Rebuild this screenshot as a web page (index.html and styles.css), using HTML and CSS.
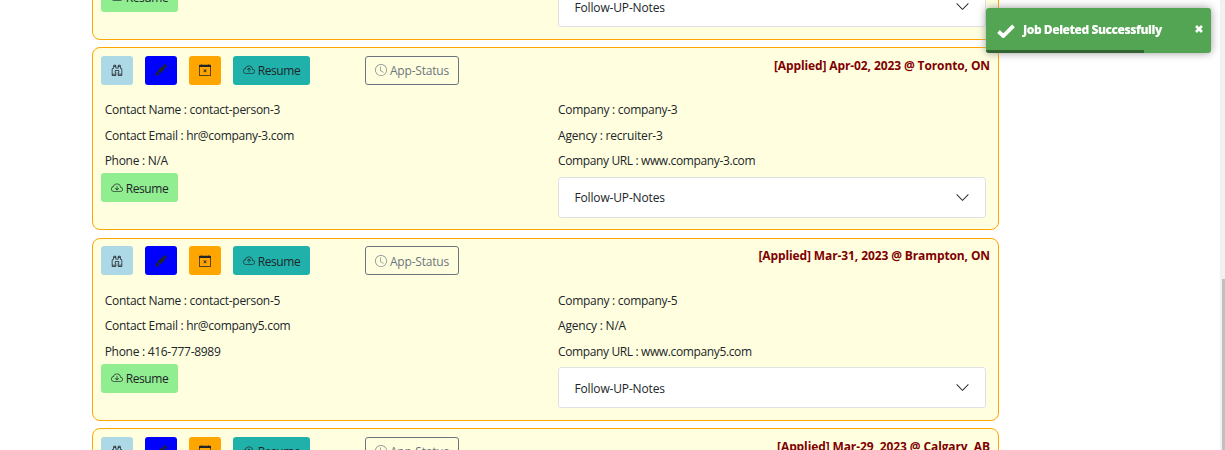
FILE: index.html
```
<!DOCTYPE html>
<html lang="en">
<head>
<meta charset="utf-8">
<title>Job Applications</title>
<link rel="stylesheet" href="styles.css">
</head>
<body>
<svg class="sprite" aria-hidden="true">
  <symbol id="binoculars" viewBox="0 0 16 16"><path d="M3 2.500A1.500 1.500 0 0 1 4.500 1h1A1.500 1.500 0 0 1 7 2.500V5h2V2.500A1.500 1.500 0 0 1 10.500 1h1A1.500 1.500 0 0 1 13 2.500v2.382a.5.5 0 0 0 .276.447l.895.447A1.500 1.500 0 0 1 15 7.118V14.500a1.500 1.500 0 0 1-1.500 1.500h-3A1.500 1.500 0 0 1 9 14.500v-3a.5.5 0 0 1 .146-.354l.854-.853V9.500a.5.5 0 0 0-.5-.5h-3a.5.5 0 0 0-.5.5v.793l.854.853A.5.5 0 0 1 7 11.500v3A1.500 1.500 0 0 1 5.500 16h-3A1.500 1.500 0 0 1 1 14.500V7.118a1.500 1.500 0 0 1 .83-1.342l.894-.447A.5.5 0 0 0 3 4.882V2.500zM4.500 2a.5.5 0 0 0-.5.5V3h2v-.5a.5.5 0 0 0-.5-.5h-1zM6 4H4v.882a1.500 1.500 0 0 1-.83 1.342l-.894.447A.5.5 0 0 0 2 7.118V13h4v-1.293l-.854-.853A.5.5 0 0 1 5 10.500v-1A1.500 1.500 0 0 1 6.500 8h3A1.500 1.500 0 0 1 11 9.500v1a.5.5 0 0 1-.146.354l-.854.853V13h4V7.118a.5.5 0 0 0-.276-.447l-.895-.447A1.500 1.500 0 0 1 12 4.882V4h-2v1.500a.5.5 0 0 1-.5.5h-3a.5.5 0 0 1-.5-.5V4zm4-1h2v-.5a.5.5 0 0 0-.5-.5h-1a.5.5 0 0 0-.5.5V3zm4 11h-4v.5a.5.5 0 0 0 .5.5h3a.5.5 0 0 0 .5-.5V14zm-8 0H2v.5a.5.5 0 0 0 .5.5h3a.5.5 0 0 0 .5-.5V14z"/></symbol>
  <symbol id="pencil" viewBox="0 0 16 16"><path d="M12.854.146a.5.5 0 0 0-.707 0L10.500 1.793 14.207 5.500l1.647-1.646a.5.5 0 0 0 0-.708l-3-3zM13.500 6.207 9.793 2.500 3.293 9H3.500a.5.5 0 0 1 .5.5v.5h.5a.5.5 0 0 1 .5.5v.5h.5a.5.5 0 0 1 .5.5v.5h.5a.5.5 0 0 1 .5.5v.207l6.500-6.500zM6.032 13.675A.5.5 0 0 1 6 13.500V13h-.5a.5.5 0 0 1-.5-.5V12h-.5a.5.5 0 0 1-.5-.5V11h-.5a.5.5 0 0 1-.5-.5V10h-.5a.5.5 0 0 1-.175-.032l-.179.178a.5.5 0 0 0-.11.168l-2 5a.5.5 0 0 0 .65.65l5-2a.5.5 0 0 0 .168-.11l.178-.179z"/></symbol>
  <symbol id="calendar" viewBox="0 0 16 16"><path d="M6.146 7.146a.5.5 0 0 1 .708 0L8 8.293l1.146-1.147a.5.5 0 1 1 .708.708L8.707 9l1.147 1.146a.5.5 0 0 1-.708.708L8 9.707l-1.146 1.147a.5.5 0 0 1-.708-.708L7.293 9 6.146 7.854a.5.5 0 0 1 0-.708z"/><path d="M3.500 0a.5.5 0 0 1 .5.5V1h8V.5a.5.5 0 0 1 1 0V1h2a1 1 0 0 1 1 1v13a1 1 0 0 1-1 1H1a1 1 0 0 1-1-1V2a1 1 0 0 1 1-1h2V.5a.5.5 0 0 1 .5-.5zM1 4v11h14V4H1z"/></symbol>
  <symbol id="cloud" viewBox="0 0 16 16"><path d="M4.406 3.342A5.530 5.530 0 0 1 8 2c2.690 0 4.923 2 5.166 4.579C14.758 6.804 16 8.137 16 9.773 16 11.569 14.502 13 12.687 13H3.781C1.708 13 0 11.366 0 9.318c0-1.763 1.266-3.223 2.942-3.593.143-.863.698-1.723 1.464-2.383zm.653.757c-.757.653-1.153 1.440-1.153 2.056v.448l-.445.049C2.064 6.805 1 7.952 1 9.318 1 10.785 2.230 12 3.781 12h8.906C13.980 12 15 10.988 15 9.773c0-1.216-1.020-2.228-2.313-2.228h-.5v-.5C12.188 4.825 10.328 3 8 3a4.530 4.530 0 0 0-2.941 1.100z"/></symbol>
  <symbol id="cloud-up" viewBox="0 0 16 16"><use href="#cloud"/><path d="M7.646 5.146a.5.5 0 0 1 .708 0l2 2a.5.5 0 0 1-.708.708L8.500 6.707V10.500a.5.5 0 0 1-1 0V6.707L6.354 7.854a.5.5 0 1 1-.708-.708l2-2z"/></symbol>
  <symbol id="cloud-down" viewBox="0 0 16 16"><use href="#cloud"/><path d="M7.646 10.854a.5.5 0 0 0 .708 0l2-2a.5.5 0 0 0-.708-.708L8.500 9.293V5.500a.5.5 0 0 0-1 0v3.793L6.354 8.146a.5.5 0 1 0-.708.708l2 2z"/></symbol>
  <symbol id="clock" viewBox="0 0 16 16"><path d="M8 3.500a.5.5 0 0 0-1 0V9a.5.5 0 0 0 .252.434l3.500 2a.5.5 0 0 0 .496-.868L8 8.710V3.500z"/><path d="M8 16A8 8 0 1 0 8 0a8 8 0 0 0 0 16zm7-8A7 7 0 1 1 1 8a7 7 0 0 1 14 0z"/></symbol>
  <symbol id="chevron" viewBox="0 0 16 16"><path fill-rule="evenodd" d="M1.646 4.646a.5.5 0 0 1 .708 0L8 10.293l5.646-5.647a.5.5 0 0 1 .708.708l-6 6a.5.5 0 0 1-.708 0l-6-6a.5.5 0 0 1 0-.708z"/></symbol>
</svg>

<main class="job-list" id="jobs"></main>

<div class="toast" role="alert">
  <svg class="toast-check" viewBox="0 0 18 14"><path d="M1.500 7.500 6.300 12 16.500 1.800" fill="none" stroke="#fff" stroke-width="3.800"/></svg>
  <span class="toast-title">Job Deleted Successfully</span>
  <svg class="toast-close" viewBox="0 0 8 8"><path d="M1 1 7 7M7 1 1 7" stroke="#fff" stroke-width="2.600"/></svg>
  <div class="toast-progress"></div>
</div>
<div class="scroll-track"><div class="scroll-thumb"></div></div>
<script src="jobs.js"></script>
</body>
</html>
```
FILE: styles.css
```
* { box-sizing: border-box; }
body {
  margin: 0;
  height: 450px;
  overflow: hidden;
  background: #fff;
  color: #212529;
  font-family: "Open Sans", "Noto Sans", sans-serif;
  font-size: 12px;
}
svg { fill: currentColor; }
.sprite { display: none; }
.job-list {
  display: flex;
  flex-direction: column;
  gap: 7.500px;
  width: 907px;
  height: 593px;
  overflow: hidden;
  margin: -143.300px 0 0 92px;
}
.job {
  height: 183px;
  flex: none;
  padding: 7.700px 8px 8px;
  border: 1px solid orange;
  border-radius: 8px;
  background: lightyellow;
}
.job-head { display: flex; height: 44.500px; align-items: flex-start; }
.btn {
  display: flex;
  align-items: center;
  justify-content: center;
  gap: 3px;
  width: 32px;
  height: 29px;
  margin-right: 12px;
  border-radius: 3px;
  line-height: 18px;
}
.btn svg { width: 12px; height: 12px; flex: none; }
.btn span { padding-top: 2px; }
.view { background: lightblue; }
.edit { background: blue; }
.remove { background: orange; }
.upload, .download { width: 77px; letter-spacing: -0.400px; }
.upload svg, .download svg, .status svg { opacity: 0.85; }
.upload { background: lightseagreen; }
.download { background: lightgreen; margin: 0; }
.status { width: 94px; margin-left: 43px; border: 1px solid #6c757d; color: #6c757d; letter-spacing: -0.200px; }
.applied {
  margin-left: auto;
  line-height: 20px;
  font-weight: 700;
  letter-spacing: -0.110px;
  color: #800000;
  white-space: nowrap;
}
.job-body { display: grid; grid-template-columns: 457px 428px; }
.field { height: 25.400px; line-height: 20px; padding-left: 3.700px; letter-spacing: -0.290px; white-space: nowrap; }
.company .field { padding-left: 0; }
.company .field:nth-child(2) { letter-spacing: -0.200px; }
.company .field:nth-child(3) { letter-spacing: -0.370px; }
.contact .download { margin-top: -3.300px; }
.notes {
  display: flex;
  align-items: center;
  justify-content: space-between;
  height: 41px;
  margin-top: 0.200px;
  padding: 0 15px 0 15.500px;
  border: 1px solid #dee2e6;
  border-radius: 3px;
  background: #fff;
  letter-spacing: -0.160px;
}
.notes span { padding-top: 1px; }
.notes svg { width: 15px; height: 15px; }
.toast {
  position: fixed;
  top: 8px;
  left: 986px;
  width: 225px;
  height: 45px;
  display: flex;
  align-items: center;
  padding: 0 8px 3px 11px;
  border-radius: 3px;
  background: #53a553;
  color: #fff;
  box-shadow: 0 0 9px #999;
  overflow: hidden;
}
.toast-check { width: 18px; height: 14px; margin-top: 4px; }
.toast-title { margin-left: 8px; font-weight: 800; letter-spacing: -0.460px; white-space: nowrap; }
.toast-close { width: 8px; height: 8px; margin: -1px 0 0 auto; }
.toast-progress { position: absolute; left: 0; bottom: 0; width: 158px; height: 3px; background: #326332; }
.scroll-track { position: fixed; right: 0; top: 0; width: 5px; height: 450px; padding: 279px 0 0 2px; background: #f1f1f1; }
.scroll-thumb { height: 171px; background: #c1c1c1; }
```
FILE: jobs.js
```
const jobs = [
  { applied: "Apr-04, 2023 @ Toronto, ON", name: "contact-person-2", email: "hr@company-2.com", phone: "N/A", company: "company-2", agency: "N/A", url: "www.company-2.com" },
  { applied: "Apr-02, 2023 @ Toronto, ON", name: "contact-person-3", email: "hr@company-3.com", phone: "N/A", company: "company-3", agency: "recruiter-3", url: "www.company-3.com" },
  { applied: "Mar-31, 2023 @ Brampton, ON", name: "contact-person-5", email: "hr@company5.com", phone: "416-777-8989", company: "company-5", agency: "N/A", url: "www.company5.com" },
  { applied: "Mar-29, 2023 @ Calgary, AB" }
];
const icon = (id) => `<svg><use href="#${id}"/></svg>`;
const field = (label, value) => `<div class="field"><span>${label} : ${value}</span></div>`;
const details = (j) => `
    <div class="job-body">
      <div class="contact">
        ${field("Contact Name", j.name)}${field("Contact Email", j.email)}${field("Phone", j.phone)}
        <div class="btn download">${icon("cloud-down")}<span>Resume</span></div>
      </div>
      <div class="company">
        ${field("Company", j.company)}${field("Agency", j.agency)}${field("Company URL", j.url)}
        <div class="notes"><span>Follow-UP-Notes</span>${icon("chevron")}</div>
      </div>
    </div>`;
document.getElementById("jobs").innerHTML = jobs.map((j) => `
  <section class="job">
    <div class="job-head">
      <div class="btn view">${icon("binoculars")}</div>
      <div class="btn edit">${icon("pencil")}</div>
      <div class="btn remove">${icon("calendar")}</div>
      <div class="btn upload">${icon("cloud-up")}<span>Resume</span></div>
      <div class="btn status">${icon("clock")}<span>App-Status</span></div>
      <div class="applied">[Applied] ${j.applied}</div>
    </div>
    ${j.name ? details(j) : ""}
  </section>`).join("");
```
